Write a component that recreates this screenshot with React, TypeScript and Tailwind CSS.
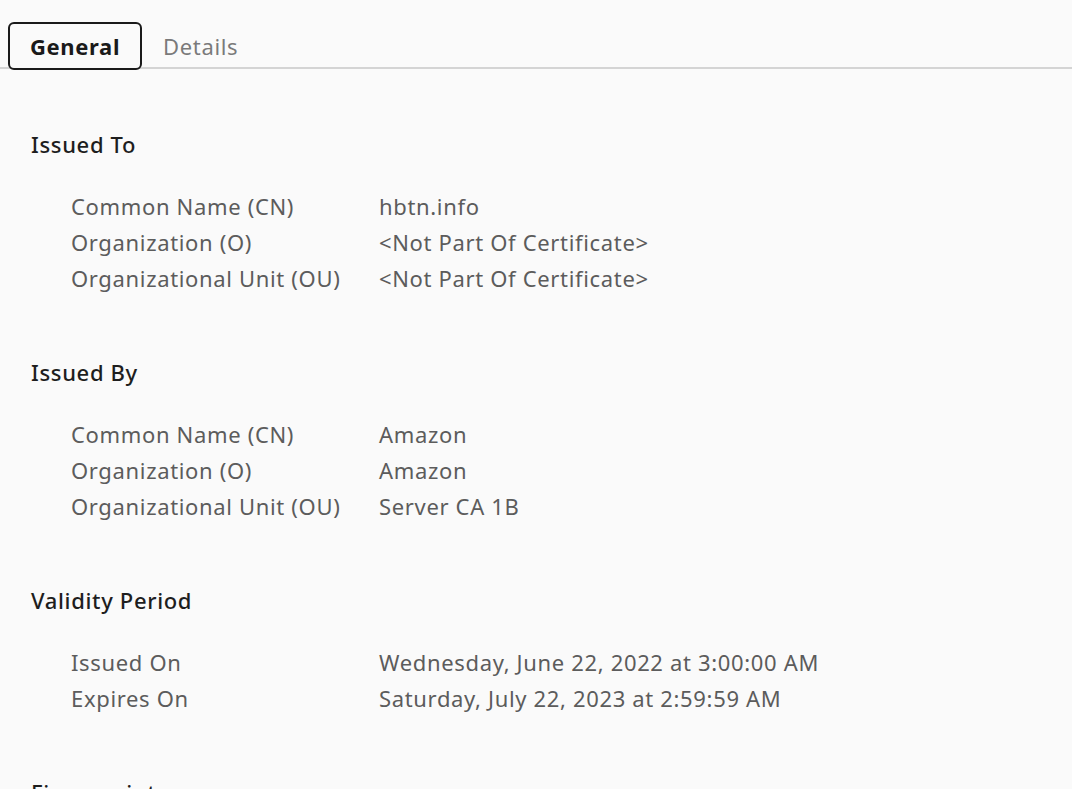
const sections = [
  {
    title: 'Issued To',
    rows: [
      ['Common Name (CN)', 'hbtn.info'],
      ['Organization (O)', '<Not Part Of Certificate>'],
      ['Organizational Unit (OU)', '<Not Part Of Certificate>'],
    ],
  },
  {
    title: 'Issued By',
    rows: [
      ['Common Name (CN)', 'Amazon'],
      ['Organization (O)', 'Amazon'],
      ['Organizational Unit (OU)', 'Server CA 1B'],
    ],
  },
  {
    title: 'Validity Period',
    rows: [
      ['Issued On', 'Wednesday, June 22, 2022 at 3:00:00 AM'],
      ['Expires On', 'Saturday, July 22, 2023 at 2:59:59 AM'],
    ],
  },
  {
    title: 'Fingerprints',
    rows: [],
  },
]

export default function App() {
  return (
    <div
      className="h-[789px] w-[1072px] overflow-hidden bg-[#fafafa] text-[22px] tracking-[0.03em]"
      style={{ fontFamily: '"Noto Sans", "Open Sans", sans-serif' }}
    >
      {/* tab strip */}
      <div className="relative flex items-end pt-[22px] pl-2">
        <div className="absolute bottom-[1px] left-0 right-0 h-[2px] bg-[#d4d4d4]" />
        <div className="relative z-10 flex h-[48px] w-[134px] items-center justify-center rounded-[6px] border-2 border-[#1a1a1a] bg-[#fafafa] pt-[1px] font-bold text-[#1a1a1a]">
          General
        </div>
        <div className="relative z-10 flex h-[48px] items-center pt-[1px] pl-[21px] text-[#7a7a7a]">Details</div>
      </div>

      <div className="flex flex-col gap-[58px] pt-[56px] pl-[31px]">
        {sections.map((s) => (
          <section key={s.title} className="flex flex-col gap-[26px]">
            <h2 className="h-[36px] leading-[36px] font-medium text-[#1e1e1e]">{s.title}</h2>
            {s.rows.length > 0 && (
              <div className="grid grid-cols-[308px_1fr] pl-[40px] text-[#5c5c5c]">
                {s.rows.map(([k, v]) => (
                  <div key={k} className="contents">
                    <div className="h-[36px] leading-[36px]">{k}</div>
                    <div className="h-[36px] leading-[36px]">{v}</div>
                  </div>
                ))}
              </div>
            )}
          </section>
        ))}
      </div>
    </div>
  )
}
